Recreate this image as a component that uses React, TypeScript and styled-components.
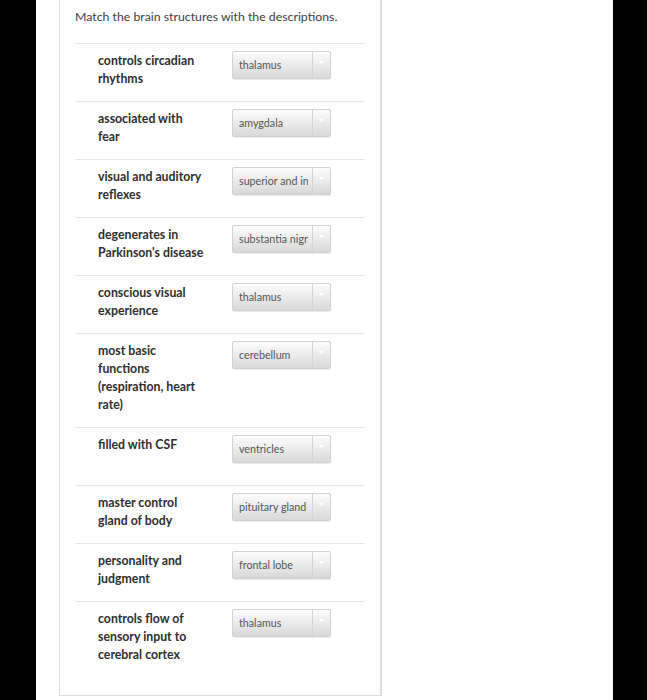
import styled, { createGlobalStyle } from "styled-components";

const GlobalStyle = createGlobalStyle`
  html, body {
    margin: 0;
    padding: 0;
    background: #000;
  }
  body {
    font-family: Lato, "Open Sans", "Liberation Sans", sans-serif;
  }
`;

const items = [
  { text: "controls circadian rhythms", answer: "thalamus" },
  { text: "associated with fear", answer: "amygdala" },
  { text: "visual and auditory reflexes", answer: "superior and inferior colliculi" },
  { text: "degenerates in Parkinson's disease", answer: "substantia nigra" },
  { text: "conscious visual experience", answer: "thalamus" },
  { text: "most basic functions (respiration, heart rate)", answer: "cerebellum" },
  { text: "filled with CSF", answer: "ventricles" },
  { text: "master control gland of body", answer: "pituitary gland" },
  { text: "personality and judgment", answer: "frontal lobe" },
  { text: "controls flow of sensory input to cerebral cortex", answer: "thalamus" },
];

const App = () => {
  return (
    <>
      <GlobalStyle />
      <Screen>
        <Sheet>
          <Card>
            <Title>Match the brain structures with the descriptions.</Title>
            <List>
              {items.map((item, i) => (
                <Row key={i}>
                  <Label>{item.text}</Label>
                  <SelectCell>
                    <Select>
                      <SelectValue>{item.answer}</SelectValue>
                      <Arrow>
                        <svg width="5" height="4" viewBox="0 0 5 4">
                          <path d="M0 0 L5 0 L2.5 3.5 Z" fill="#fff" />
                        </svg>
                      </Arrow>
                    </Select>
                  </SelectCell>
                </Row>
              ))}
            </List>
          </Card>
        </Sheet>
      </Screen>
    </>
  );
};

const Screen = styled.div`
  height: 700px;
  padding: 0 34px 0 36px;
  background: #000;
  overflow: hidden;
`;

const Sheet = styled.div`
  height: 100%;
  background: #fff;
  padding-left: 23px;
`;

const Card = styled.div`
  width: 320px;
  border: 1px solid #dcdcdc;
  border-right-width: 2px;
  border-top: none;
  padding: 10px 0 18px;
`;

const Title = styled.div`
  padding-left: 15px;
  font-size: 12.3px;
  line-height: 14px;
  color: #3d3d3d;
  margin-bottom: 19px;
`;

const List = styled.div`
  margin: 0 15px;
`;

const Row = styled.div`
  display: flex;
  align-items: flex-start;
  border-top: 1px solid #e6e6e6;
`;

const Label = styled.div`
  width: 107px;
  margin-left: 23px;
  margin-right: 27px;
  padding: 8px 0 13px;
  font-size: 12.3px;
  font-weight: 700;
  line-height: 18px;
  color: #2e2e2e;
`;

const SelectCell = styled.div`
  padding: 7px 0 22px;
`;

const Select = styled.div`
  display: flex;
  width: 99px;
  height: 28px;
  box-sizing: border-box;
  border: 1px solid #d2d2d2;
  border-radius: 2px;
  background: linear-gradient(#fdfdfd, #d8d8d8);
  box-shadow: 0 1px 1px rgba(0, 0, 0, 0.08);
`;

const SelectValue = styled.div`
  flex: 1;
  min-width: 0;
  margin: 0 4px 0 6px;
  overflow: hidden;
  white-space: nowrap;
  font-size: 10.7px;
  line-height: 26px;
  color: #555;
`;

const Arrow = styled.div`
  width: 17px;
  display: flex;
  align-items: center;
  justify-content: center;
  border-left: 1px solid #d4d4d4;
  padding-bottom: 4px;
`;

export default App;
